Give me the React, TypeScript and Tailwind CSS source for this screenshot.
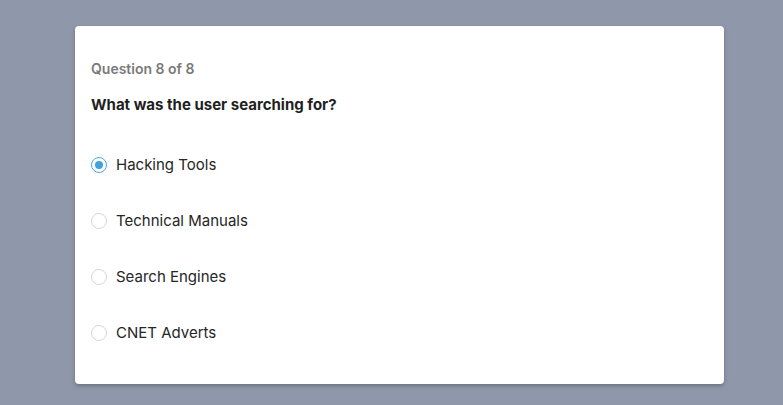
import React from "react";

const options = ["Hacking Tools", "Technical Manuals", "Search Engines", "CNET Adverts"];

export default function App() {
  return (
    <div
      className="w-[783px] h-[405px] bg-[#8f98aa] pt-[26px] pl-[75px]"
      style={{ fontFamily: "Inter, 'Noto Sans', sans-serif" }}
    >
      <div className="w-[649px] h-[358px] bg-white rounded-[4px] shadow-[0_2px_4px_rgba(0,0,0,0.25)] px-4 pt-[34px]">
        <div className="text-[14px] leading-[18px] font-semibold text-[#7a7a7a]">Question 8 of 8</div>
        <div className="mt-[18px] text-[15px] leading-[18px] font-bold text-[#1f1f1f]">
          What was the user searching for?
        </div>
        <div className="mt-[41px] flex flex-col gap-[36px]">
          {options.map((o, i) => (
            <label key={o} className="flex items-center h-[20px]">
              <span
                className={
                  i === 0
                    ? "w-[16px] h-[16px] rounded-full border border-[#4aa8df] flex items-center justify-center"
                    : "w-[16px] h-[16px] rounded-full border border-[#d4d6da]"
                }
              >
                {i === 0 && <span className="w-[8px] h-[8px] rounded-full bg-[#3fa3de]" />}
              </span>
              <span className="ml-[9px] text-[15px] leading-[20px] text-[#262626]">{o}</span>
            </label>
          ))}
        </div>
      </div>
    </div>
  );
}
